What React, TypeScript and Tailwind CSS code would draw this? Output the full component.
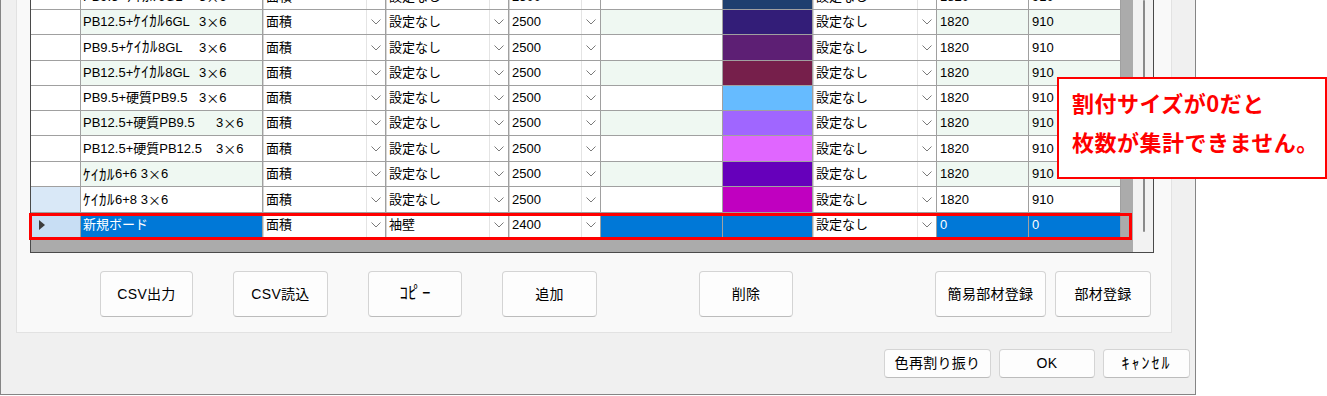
import React from "react";

type Row = {
  name: string;
  tail?: string;
  tailAt?: string;
  area: string;
  wall: string;
  size: string;
  swatch: string;
  setting: string;
  w: string;
  d: string;
  h: string;
  green?: boolean;
  head?: string;
  selected?: boolean;
  partial?: boolean;
};

const rows: Row[] = [
  { name: "PB9.5+ｹｲｶﾙ6GL", tail: "3×6", tailAt: "w-[116px]", area: "面積", wall: "設定なし", size: "2500", swatch: "bg-[#1f3f6f]", setting: "設定なし", w: "1820", d: "910", h: "h-[10px]", partial: true },
  { name: "PB12.5+ｹｲｶﾙ6GL", tail: "3×6", tailAt: "w-[116px]", area: "面積", wall: "設定なし", size: "2500", swatch: "bg-[#331d78]", setting: "設定なし", w: "1820", d: "910", h: "h-[25px]", green: true },
  { name: "PB9.5+ｹｲｶﾙ8GL", tail: "3×6", tailAt: "w-[116px]", area: "面積", wall: "設定なし", size: "2500", swatch: "bg-[#5d1f74]", setting: "設定なし", w: "1820", d: "910", h: "h-[26px]" },
  { name: "PB12.5+ｹｲｶﾙ8GL", tail: "3×6", tailAt: "w-[116px]", area: "面積", wall: "設定なし", size: "2500", swatch: "bg-[#761f4b]", setting: "設定なし", w: "1820", d: "910", h: "h-[25px]", green: true },
  { name: "PB9.5+硬質PB9.5", tail: "3×6", tailAt: "w-[116px]", area: "面積", wall: "設定なし", size: "2500", swatch: "bg-[#66bbff]", setting: "設定なし", w: "1820", d: "910", h: "h-[25px]" },
  { name: "PB12.5+硬質PB9.5", tail: "3×6", tailAt: "w-[133px]", area: "面積", wall: "設定なし", size: "2500", swatch: "bg-[#a066ff]", setting: "設定なし", w: "1820", d: "910", h: "h-[25px]", green: true },
  { name: "PB12.5+硬質PB12.5", tail: "3×6", tailAt: "w-[133px]", area: "面積", wall: "設定なし", size: "2500", swatch: "bg-[#e066ff]", setting: "設定なし", w: "1820", d: "910", h: "h-[26px]" },
  { name: "ｹｲｶﾙ6+6 3×6", area: "面積", wall: "設定なし", size: "2500", swatch: "bg-[#6600bb]", setting: "設定なし", w: "1820", d: "910", h: "h-[25px]", green: true },
  { name: "ｹｲｶﾙ6+8 3×6", area: "面積", wall: "設定なし", size: "2500", swatch: "bg-[#c000c0]", setting: "設定なし", w: "1820", d: "910", h: "h-[26px]", head: "bg-[#d9e8f7]" },
  { name: "新規ボード", area: "面積", wall: "袖壁", size: "2400", swatch: "", setting: "設定なし", w: "0", d: "0", h: "h-[25px]", head: "bg-[#c8def4]", selected: true },
];

const cell = "flex shrink-0 items-center border-r border-[#a0a0a0] overflow-hidden whitespace-pre";

// half-width kana are drawn a size up so they read like the UI font; × comes from the CJK face
function Label({ text }: { text: string }) {
  const parts = text.split(/([ｦ-ﾟ]+|×)/);
  return (
    <>
      {parts.map((p, i) =>
        p === "×" ? (
          <span key={i} className="font-['Noto_Sans_CJK_JP',sans-serif]">×</span>
        ) : /^[ｦ-ﾟ]+$/.test(p) ? (
          <span key={i} className="text-[15px] leading-none tracking-[0.5px]">{p}</span>
        ) : (
          p
        )
      )}
    </>
  );
}

function Chevron() {
  return (
    <svg width="10" height="6" viewBox="0 0 10 6" fill="none">
      <polyline points="0.5,0.5 5,5 9.5,0.5" stroke="#7a7a7a" strokeWidth="1" />
    </svg>
  );
}

function Combo({ width, text }: { width: string; text: string }) {
  return (
    <div className={`${width} flex shrink-0 border-r border-[#a0a0a0] bg-white`}>
      <div className="flex flex-1 items-center overflow-hidden whitespace-pre border-l border-[#d6d6d6] pl-[2px]">{text}</div>
      <div className="flex w-[19px] items-center justify-center border-l border-[#e4e4e4]">
        <Chevron />
      </div>
    </div>
  );
}

function GridRow({ r }: { r: Row }) {
  const band = r.green ? "bg-[#eff8f2]" : "bg-white";
  const fill = r.selected ? "bg-[#0078d7] text-white" : band;
  return (
    <div className={`relative flex w-[1090px] flex-col justify-end border-b border-[#a0a0a0] ${r.h} ${r.partial ? "overflow-hidden" : ""}`}>
      <div className={`flex shrink-0 ${r.partial ? "h-[24px]" : "h-full"}`}>
        <div className={`${cell} w-[50px] pl-[8px] ${r.head ?? "bg-white"}`}>
          {r.selected && (
            <svg width="6" height="10" viewBox="0 0 6 10">
              <polygon points="0,0 6,5 0,10" fill="#3c3c3c" />
            </svg>
          )}
        </div>
        <div className={`${cell} w-[182px] pl-[2px] ${fill}`}>
          {r.tail ? (
            <>
              <span className={`inline-block ${r.tailAt}`}>
                <Label text={r.name} />
              </span>
              <Label text={r.tail} />
            </>
          ) : (
            <Label text={r.name} />
          )}
        </div>
        <Combo width="w-[123px]" text={r.area} />
        <Combo width="w-[123px]" text={r.wall} />
        <Combo width="w-[92px]" text={r.size} />
        <div className={`${cell} w-[122px] ${fill}`} />
        <div className={`${cell} w-[90px] ${r.selected ? "bg-[#0078d7]" : r.swatch}`} />
        <Combo width="w-[124px]" text={r.setting} />
        <div className={`${cell} w-[92px] pl-[3px] ${fill}`}>{r.w}</div>
        <div className={`${cell} w-[92px] pl-[3px] ${fill}`}>{r.d}</div>
      </div>
      {r.selected && (
        <div className="absolute left-[-2px] top-0 z-10 h-[27px] w-[1103px] border-[3px] border-[#ff0000]" />
      )}
    </div>
  );
}

function Btn({ className, children }: { className: string; children: React.ReactNode }) {
  return (
    <button
      type="button"
      className={`flex shrink-0 items-center justify-center rounded-[4px] border border-[#d4d4d4] border-b-[#bcbcbc] bg-[#fdfdfd] text-[14px] tracking-[0.3px] text-black ${className}`}
    >
      {children}
    </button>
  );
}

export default function App() {
  return (
    <div className="relative h-[396px] w-[1327px] overflow-hidden bg-white font-['Liberation_Sans','Noto_Sans_CJK_JP',sans-serif] text-[13px] text-black">
      {/* window */}
      <div className="flex h-[395px] w-[1196px] flex-col border-b border-l border-r border-[#858585] bg-[#f0f0f0] pl-[15px]">
        {/* inner panel */}
        <div className="flex h-[333px] w-[1156px] flex-col border-b border-l border-r border-[#e2e2e2] bg-[#f9f9f9] pl-[13px]">
          {/* grid */}
          <div className="flex h-[253px] w-[1124px] border-b border-l border-r border-[#4a4a4a]">
            <div className="flex w-[1102px] flex-col bg-[#ababab]">
              {rows.map((r, i) => (
                <GridRow key={i} r={r} />
              ))}
            </div>
            <div className="w-[20px] bg-[#f2f2f2] pl-[10px]">
              <div className="h-[232px] w-[2px] rounded-full bg-[#8a8a8a]" />
            </div>
          </div>

          {/* actions */}
          <div className="mt-[18px] flex h-[46px] pl-[70px]">
            <Btn className="w-[93px]">CSV出力</Btn>
            <Btn className="ml-[40px] w-[95px]">CSV読込</Btn>
            <Btn className="ml-[40px] w-[94px]">
              <span className="text-[17px] tracking-normal">
                ｺﾋ<span className="-ml-[3px]">ﾟ</span>ｰ
              </span>
            </Btn>
            <Btn className="ml-[40px] w-[95px]">追加</Btn>
            <Btn className="ml-[102px] w-[94px]">削除</Btn>
            <Btn className="ml-[142px] w-[111px]">簡易部材登録</Btn>
            <Btn className="ml-[9px] w-[96px]">部材登録</Btn>
          </div>
        </div>

        {/* footer */}
        <div className="mt-[16px] flex h-[29px] justify-end gap-[8px] pr-[5px]">
          <Btn className="w-[107px]">色再割り振り</Btn>
          <Btn className="w-[96px]">OK</Btn>
          <Btn className="w-[87px]">
            <span className="text-[16px] tracking-[2px]">ｷｬﾝｾﾙ</span>
          </Btn>
        </div>
      </div>

      {/* callout */}
      <div className="absolute left-[1057px] top-[77px] z-20 h-[102px] w-[270px] border-2 border-[#ff0000] bg-white pl-[13px] pt-[4px] font-['Noto_Sans_CJK_JP',sans-serif] text-[22px] font-bold leading-[39px] tracking-[0.5px] text-[#ff0000]">
        <p>割付サイズが0だと</p>
        <p>枚数が集計できません。</p>
      </div>
    </div>
  );
}
